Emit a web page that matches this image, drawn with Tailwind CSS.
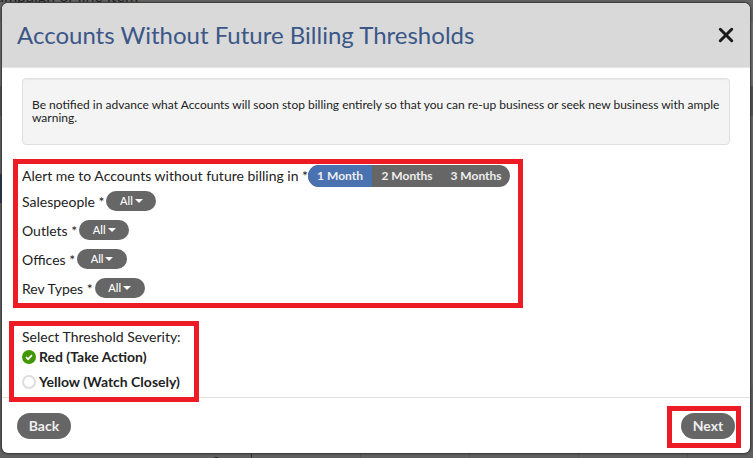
<!DOCTYPE html>
<html lang="en">
<head>
    <meta charset="UTF-8">
    <meta name="viewport" content="width=device-width, initial-scale=1.0">
    <title>Accounts Without Future Billing Thresholds</title>
    <script src="https://cdn.jsdelivr.net/npm/@tailwindcss/browser@4"></script>
</head>
<body class="relative min-h-screen overflow-hidden bg-[#666] font-['Lato',sans-serif] text-sm leading-5 text-[#222]">
    <!-- Page behind the modal -->
    <div class="absolute inset-0 overflow-hidden" aria-hidden="true">
        <p class="absolute -top-3 -left-1 text-base leading-4 whitespace-nowrap text-[#222]">ampaign or line item</p>
        <div class="absolute top-[22px] inset-x-0 h-16 bg-[#707070]"></div>
        <div class="absolute top-[86px] inset-x-0 h-[30px] bg-[#555]"></div>
        <div class="absolute top-[174px] left-0 w-2 h-[29px] bg-[#1f3358]"></div>
        <div class="absolute top-[386px] inset-x-0 bottom-0 bg-[#606060]"></div>
        <p class="absolute top-[454px] left-[212px] text-sm leading-4">St</p>
        <div class="absolute bottom-0 left-[251px] w-px h-4 bg-[#333]"></div>
        <div class="absolute bottom-0 left-[360px] w-px h-4 bg-[#555]"></div>
        <div class="absolute bottom-0 left-[469px] w-px h-4 bg-[#555]"></div>
        <div class="absolute bottom-0 left-[578px] w-px h-4 bg-[#555]"></div>
        <div class="absolute bottom-0 left-[687px] w-px h-4 bg-[#555]"></div>
    </div>

    <!-- Modal -->
    <div class="relative mt-[3px] ml-0.5 mr-[3px] rounded-md bg-white shadow-[0_0_2px_1px_#333]" role="dialog" aria-modal="true" aria-labelledby="modal-title">
        <div class="flex items-center justify-between h-[65px] pl-[15px] pr-4 rounded-t-md border-b border-[#e5e5e5] bg-[#d9d9d9]">
            <h4 class="text-2xl leading-8 text-[#3b5788]" id="modal-title">Accounts Without Future Billing Thresholds</h4>
            <button type="button" aria-label="Close">
                <svg class="block w-4 h-4" viewBox="0 0 16 16" fill="none" stroke="#1a1a1a" stroke-width="3" stroke-linecap="round"><path d="M2.3 2.3 13.7 13.7M13.7 2.3 2.3 13.7"/></svg>
            </button>
        </div>

        <div class="px-5 pt-[10px] pb-[5px]">
            <div class="px-[9px] pt-[19px] pb-5 rounded-sm border border-[#e0e0e0] bg-[#f4f4f4] text-xs leading-[13px] shadow-[inset_0_1px_1px_#0000000d]">
                <p>Be notified in advance what Accounts will soon stop billing entirely so that you can re-up business or seek new business with ample warning.</p>
            </div>

            <form class="mt-5">
                <div class="relative w-fit">
                    <div class="absolute -top-1.5 -bottom-[10px] -left-[9px] -right-[13px] border-5 border-[#ed1c24] pointer-events-none"></div>
                    <div class="flex items-center h-[22px]">
                        <span>Alert me to Accounts without future billing in *</span>
                        <div class="flex h-[22px] rounded-full overflow-hidden bg-[#666] text-xs leading-[22px] font-bold text-[#eee]">
                            <button type="button" class="w-16 bg-[#4a72b0]">1 Month</button>
                            <button type="button" class="w-[70px]">2 Months</button>
                            <button type="button" class="w-[68px]">3 Months</button>
                        </div>
                    </div>
                    <div class="grid gap-[9px] mt-1">
                        <div class="flex gap-0.5 h-5">
                            <label for="salespeople" class="leading-[22px]">Salespeople *</label>
                            <button type="button" id="salespeople" class="flex items-center justify-center gap-0.5 w-[50px] rounded-full bg-[#666] text-[11px] font-medium text-white">All<svg class="w-2 h-1" viewBox="0 0 8 4" fill="currentColor"><path d="M0 0h8L4 4z"/></svg></button>
                        </div>
                        <div class="flex gap-0.5 h-5">
                            <label for="outlets" class="leading-[22px]">Outlets *</label>
                            <button type="button" id="outlets" class="flex items-center justify-center gap-0.5 w-[50px] rounded-full bg-[#666] text-[11px] font-medium text-white">All<svg class="w-2 h-1" viewBox="0 0 8 4" fill="currentColor"><path d="M0 0h8L4 4z"/></svg></button>
                        </div>
                        <div class="flex gap-0.5 h-5">
                            <label for="offices" class="leading-[22px]">Offices *</label>
                            <button type="button" id="offices" class="flex items-center justify-center gap-0.5 w-[50px] rounded-full bg-[#666] text-[11px] font-medium text-white">All<svg class="w-2 h-1" viewBox="0 0 8 4" fill="currentColor"><path d="M0 0h8L4 4z"/></svg></button>
                        </div>
                        <div class="flex gap-0.5 h-5">
                            <label for="revTypes" class="leading-[22px]">Rev Types *</label>
                            <button type="button" id="revTypes" class="flex items-center justify-center gap-0.5 w-[50px] rounded-full bg-[#666] text-[11px] font-medium text-white">All<svg class="w-2 h-1" viewBox="0 0 8 4" fill="currentColor"><path d="M0 0h8L4 4z"/></svg></button>
                        </div>
                    </div>
                </div>

                <div class="relative w-fit mt-[29px]">
                    <div class="absolute -top-1.5 -bottom-[10px] -left-[13px] -right-[18px] z-10 border-5 border-[#ed1c24] pointer-events-none"></div>
                    <fieldset>
                        <legend>Select Threshold Severity:</legend>
                        <label class="relative flex items-center gap-[3px] h-5 font-bold">
                            <input type="radio" name="severity" value="red" class="peer appearance-none w-3.5 h-3.5 rounded-full border-2 border-[#ddd] checked:border-[#419700] checked:bg-[#419700]" checked>
                            <svg class="absolute left-0 w-3.5 h-3.5 hidden peer-checked:block" viewBox="0 0 14 14" fill="none" stroke="#fff" stroke-width="1.7"><path d="M4 7.2 6.1 9.2 10 5.2"/></svg>
                            Red (Take Action)
                        </label>
                        <label class="relative flex items-center gap-[3px] h-5 mt-[5px] font-bold">
                            <input type="radio" name="severity" value="yellow" class="peer appearance-none w-3.5 h-3.5 rounded-full border-2 border-[#ddd] checked:border-[#419700] checked:bg-[#419700]">
                            <svg class="absolute left-0 w-3.5 h-3.5 hidden peer-checked:block" viewBox="0 0 14 14" fill="none" stroke="#fff" stroke-width="1.7"><path d="M4 7.2 6.1 9.2 10 5.2"/></svg>
                            Yellow (Watch Closely)
                        </label>
                    </fieldset>
                </div>
            </form>
        </div>

        <div class="flex items-center justify-between px-[15px] pt-[15px] pb-[14px] border-t border-[#e0e0e0]">
            <button type="button" class="w-[54px] h-[26px] rounded-full bg-[#666] font-bold text-[#eee]">Back</button>
            <div class="relative">
                <div class="absolute -top-[7px] -bottom-[9px] -left-[14px] -right-1.5 border-5 border-[#ed1c24] pointer-events-none"></div>
                <button type="button" class="block w-[54px] h-[26px] rounded-full bg-[#666] font-bold text-[#eee]">Next</button>
            </div>
        </div>
    </div>
</body>
</html>
